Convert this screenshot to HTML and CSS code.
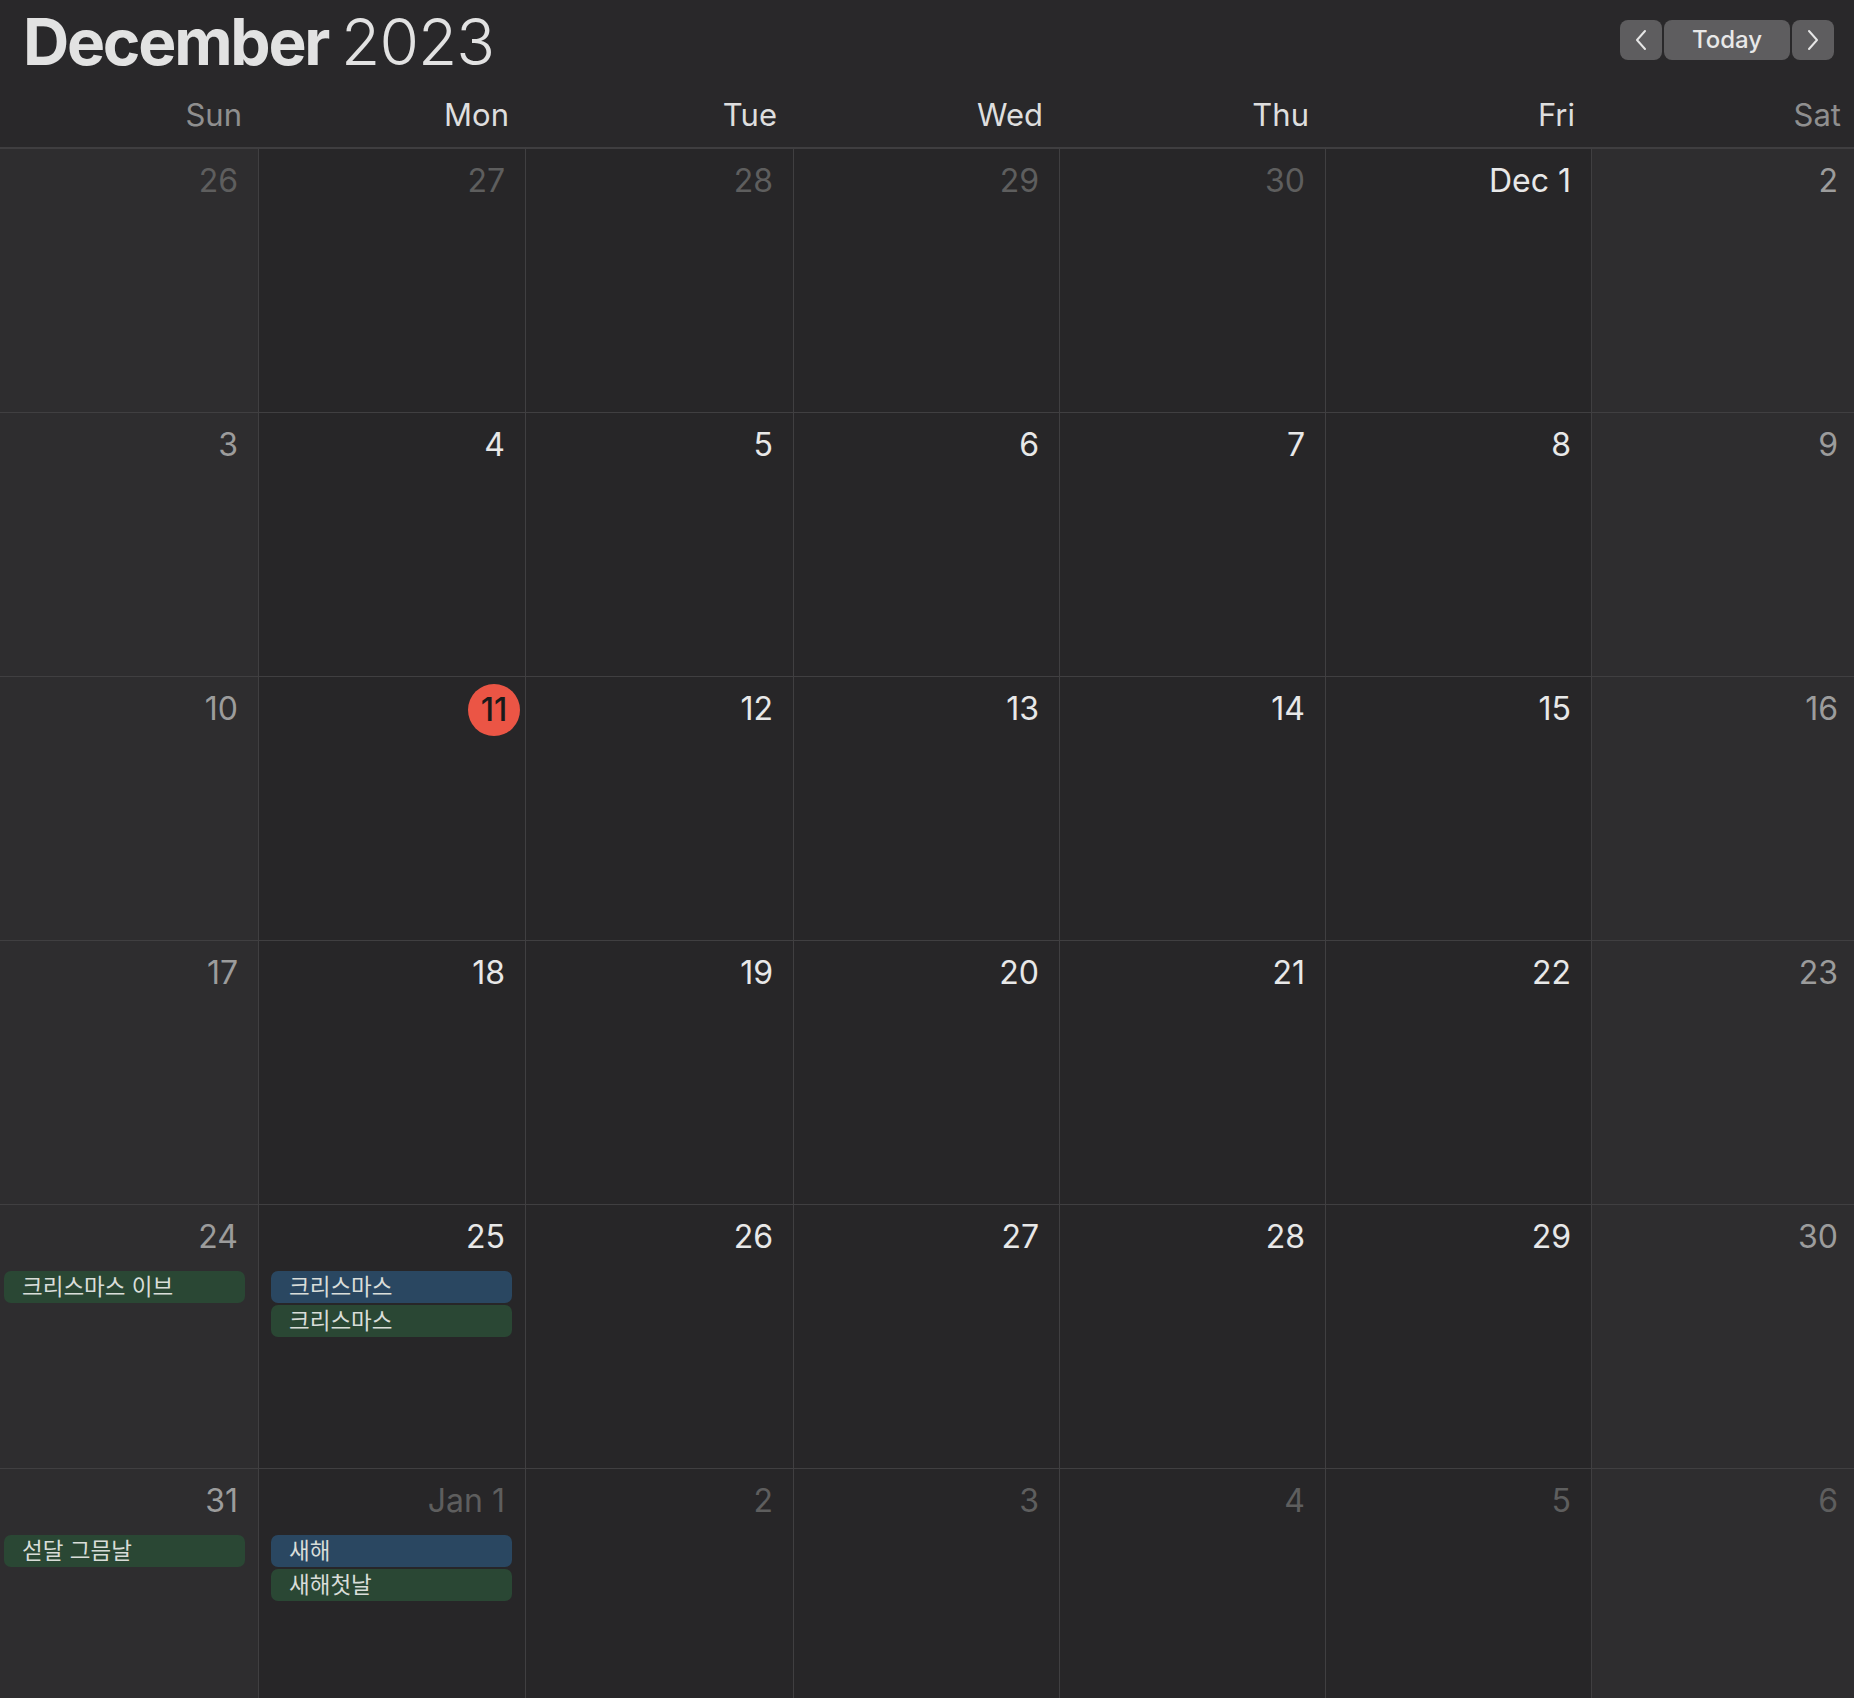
FILE: index.html
```html
<!DOCTYPE html>
<html lang="ko">
<head>
<meta charset="utf-8">
<title>December 2023</title>
<link rel="stylesheet" href="styles.css">
</head>
<body>
<div class="app">
  <header class="top">
    <div class="title-row">
      <h1 class="title"><span class="month">December</span> <span class="year">2023</span></h1>
      <div class="nav">
        <button class="nav-btn arrow" aria-label="Previous">
          <svg width="14" height="22" viewBox="0 0 14 22"><path d="M11 2 L3 11 L11 20" fill="none" stroke="#e6e6e6" stroke-width="2" stroke-linecap="round" stroke-linejoin="round"/></svg>
        </button>
        <button class="nav-btn today-btn">Today</button>
        <button class="nav-btn arrow" aria-label="Next">
          <svg width="14" height="22" viewBox="0 0 14 22"><path d="M3 2 L11 11 L3 20" fill="none" stroke="#e6e6e6" stroke-width="2" stroke-linecap="round" stroke-linejoin="round"/></svg>
        </button>
      </div>
    </div>
    <div class="days">
      <div class="day weekend">Sun</div>
      <div class="day">Mon</div>
      <div class="day">Tue</div>
      <div class="day">Wed</div>
      <div class="day">Thu</div>
      <div class="day">Fri</div>
      <div class="day weekend">Sat</div>
    </div>
  </header>

  <main class="grid">
    <!-- week 1 -->
    <div class="cell weekend other"><div class="date"><span class="num">26</span></div></div>
    <div class="cell other"><div class="date"><span class="num">27</span></div></div>
    <div class="cell other"><div class="date"><span class="num">28</span></div></div>
    <div class="cell other"><div class="date"><span class="num">29</span></div></div>
    <div class="cell other"><div class="date"><span class="num">30</span></div></div>
    <div class="cell"><div class="date"><span class="num">Dec 1</span></div></div>
    <div class="cell weekend last"><div class="date"><span class="num">2</span></div></div>
    <!-- week 2 -->
    <div class="cell weekend"><div class="date"><span class="num">3</span></div></div>
    <div class="cell"><div class="date"><span class="num">4</span></div></div>
    <div class="cell"><div class="date"><span class="num">5</span></div></div>
    <div class="cell"><div class="date"><span class="num">6</span></div></div>
    <div class="cell"><div class="date"><span class="num">7</span></div></div>
    <div class="cell"><div class="date"><span class="num">8</span></div></div>
    <div class="cell weekend last"><div class="date"><span class="num">9</span></div></div>
    <!-- week 3 -->
    <div class="cell weekend"><div class="date"><span class="num">10</span></div></div>
    <div class="cell today"><div class="date"><span class="num">11</span></div></div>
    <div class="cell"><div class="date"><span class="num">12</span></div></div>
    <div class="cell"><div class="date"><span class="num">13</span></div></div>
    <div class="cell"><div class="date"><span class="num">14</span></div></div>
    <div class="cell"><div class="date"><span class="num">15</span></div></div>
    <div class="cell weekend last"><div class="date"><span class="num">16</span></div></div>
    <!-- week 4 -->
    <div class="cell weekend"><div class="date"><span class="num">17</span></div></div>
    <div class="cell"><div class="date"><span class="num">18</span></div></div>
    <div class="cell"><div class="date"><span class="num">19</span></div></div>
    <div class="cell"><div class="date"><span class="num">20</span></div></div>
    <div class="cell"><div class="date"><span class="num">21</span></div></div>
    <div class="cell"><div class="date"><span class="num">22</span></div></div>
    <div class="cell weekend last"><div class="date"><span class="num">23</span></div></div>
    <!-- week 5 -->
    <div class="cell weekend">
      <div class="date"><span class="num">24</span></div>
      <div class="events"><div class="event green">크리스마스 이브</div></div>
    </div>
    <div class="cell">
      <div class="date"><span class="num">25</span></div>
      <div class="events"><div class="event blue">크리스마스</div><div class="event green">크리스마스</div></div>
    </div>
    <div class="cell"><div class="date"><span class="num">26</span></div></div>
    <div class="cell"><div class="date"><span class="num">27</span></div></div>
    <div class="cell"><div class="date"><span class="num">28</span></div></div>
    <div class="cell"><div class="date"><span class="num">29</span></div></div>
    <div class="cell weekend last"><div class="date"><span class="num">30</span></div></div>
    <!-- week 6 -->
    <div class="cell weekend">
      <div class="date"><span class="num">31</span></div>
      <div class="events"><div class="event green">섣달 그믐날</div></div>
    </div>
    <div class="cell other">
      <div class="date"><span class="num">Jan 1</span></div>
      <div class="events"><div class="event blue">새해</div><div class="event green">새해첫날</div></div>
    </div>
    <div class="cell other"><div class="date"><span class="num">2</span></div></div>
    <div class="cell other"><div class="date"><span class="num">3</span></div></div>
    <div class="cell other"><div class="date"><span class="num">4</span></div></div>
    <div class="cell other"><div class="date"><span class="num">5</span></div></div>
    <div class="cell weekend other last"><div class="date"><span class="num">6</span></div></div>
  </main>
</div>
</body>
</html>
```

FILE: styles.css
```css
html, body {
  margin: 0;
  padding: 0;
  background: #272628;
  overflow: hidden;
  height: 100%;
}

.app {
  width: 1854px;
  height: 1698px;
  overflow: hidden;
  font-family: Inter, "Noto Sans CJK KR", sans-serif;
  color: #e6e6e6;
}

.top {
  background: #29282a;
  border-bottom: 2px solid #3f3e40;
  height: 149px;
  box-sizing: border-box;
}

.title-row {
  display: flex;
  justify-content: space-between;
  align-items: flex-start;
  padding: 10px 20px 0 23px;
  height: 65px;
}

.title {
  margin: 0;
  font-size: 64px;
  line-height: 64px;
  letter-spacing: -0.035em;
  color: #e2e2e2;
  white-space: nowrap;
}

.month {
  font-weight: 700;
}

.year {
  font-weight: 300;
  letter-spacing: -0.015em;
}

.nav {
  display: flex;
  gap: 2px;
  margin-top: 10px;
}

.nav-btn {
  height: 40px;
  border: none;
  border-radius: 8px;
  background: #5e5d5f;
  color: #e8e8e8;
  font-family: Inter, sans-serif;
  padding: 0;
  display: flex;
  align-items: center;
  justify-content: center;
}

.arrow {
  width: 42px;
}

.today-btn {
  width: 126px;
  font-size: 24px;
  font-weight: 500;
  padding-bottom: 2px;
}

.days {
  display: grid;
  grid-template-columns: 267px 267px 268px 266px 266px 266px 262px;
  margin-left: -8px;
  margin-top: 20px;
}

.day {
  text-align: right;
  padding-right: 17px;
  font-size: 31px;
  line-height: 40px;
  color: #dedede;
}

.day.weekend {
  color: #8f8f8f;
}

.days .day:last-child {
  padding-right: 13px;
}

.grid {
  display: grid;
  grid-template-columns: 267px 267px 268px 266px 266px 266px 262px;
  grid-auto-rows: 264px;
  margin-left: -8px;
}

.cell {
  box-sizing: border-box;
  border-right: 1px solid #403f41;
  border-bottom: 1px solid #403f41;
  background: #272628;
  overflow: hidden;
}

.cell.last {
  border-right: none;
}

.cell.weekend {
  background: #2e2d2f;
}

.date {
  display: flex;
  justify-content: flex-end;
  padding: 12px 20px 0 20px;
  height: 40px;
  font-size: 32px;
  line-height: 40px;
  color: #e8e8e8;
}

.cell.last .date {
  padding-right: 16px;
}

.cell.weekend .date {
  color: #9c9c9c;
}

.cell.other .date {
  color: #5e5e5e;
}

.cell.today .num {
  width: 52px;
  height: 52px;
  flex: none;
  border-radius: 50%;
  background: #eb5545;
  color: #1a1a1a;
  display: flex;
  align-items: center;
  justify-content: center;
  margin: -5px -15px 0 0;
  font-weight: 500;
}

.events {
  display: flex;
  flex-direction: column;
  gap: 2px;
  margin-top: 14px;
  padding: 0 13px 0 12px;
}

.event {
  height: 32px;
  line-height: 32px;
  border-radius: 7px;
  padding-left: 18px;
  font-size: 22.5px;
  color: #d9ddd9;
  white-space: nowrap;
  overflow: hidden;
}

.event.green {
  background: #2a4734;
}

.event.blue {
  background: #2a4761;
}
```
